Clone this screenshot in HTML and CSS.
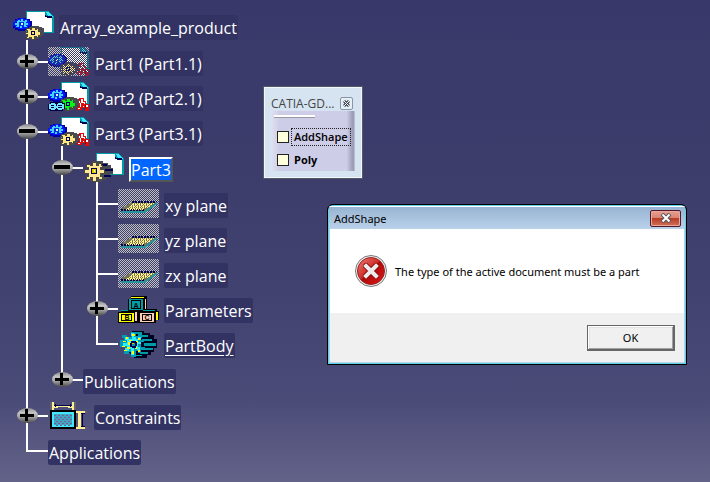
FILE: index.html
```html
<!DOCTYPE html>
<html lang="en">
<head>
<meta charset="utf-8">
<title>Array_example_product</title>
<link rel="stylesheet" href="styles.css">
</head>
<body>
<svg class="defs" width="0" height="0" aria-hidden="true">
  <defs>
    <linearGradient id="ball" x1="0" y1="0" x2="0" y2="1">
      <stop offset="0" stop-color="#8a8a8a"/><stop offset=".3" stop-color="#c4c4c4"/>
      <stop offset=".6" stop-color="#a2a2a2"/><stop offset="1" stop-color="#484848"/>
    </linearGradient>
    <linearGradient id="red" x1="0" y1="0" x2="1" y2="1">
      <stop offset="0" stop-color="#ee8078"/><stop offset=".45" stop-color="#cf2d29"/>
      <stop offset=".5" stop-color="#ae0a0a"/><stop offset="1" stop-color="#e01818"/>
    </linearGradient>

    <symbol id="doc" viewBox="0 0 41 29">
      <path d="M13 0h22l6 6v16h-28z" fill="#009ca5"/>
      <path d="M14 1h18v4h7v16h-25z" fill="#fff"/>
      <path d="M33 1h2l5 4v1h-4z" fill="#42e7ff"/>
      <path d="M32 4h1v1h6v2h-5v-1h-2z" fill="#000052"/>
    </symbol>
    <symbol id="gear-blue" viewBox="0 0 41 29">
      <path d="M5 7h8v1h4v2h2v7h-2v2h-4v1h-8v-1h-3v-2h-2v-6h2v-3h3z" fill="#0000a5"/>
      <path d="M4 8h3v-1h4v1h3v1h2v2h1v4h-2v2h-2v1h-8v-1h-3v-2h-2v-4h2v-2h2z" fill="#0018ff"/>
      <path d="M5 9h2v1h1v-2h2v2h2v-1h2v2h-1v1h2v2h-2v1h1v1h-3v-1h-2v2h-2v-2h-1v1h-3v-1h1v-1h-2v-2h2v-1h-1z" fill="#42d6ff"/>
      <path d="M6 11h5v4h-5z" fill="#0030de"/><path d="M8 12h2v2h-2z" fill="#d6f7ff"/>
    </symbol>
    <symbol id="gear-small" viewBox="0 0 41 29">
      <path d="M18 15h8v1h3v1h2v7h-2v2h-3v2h-9v-1h-3v-8h2v-3h2z" fill="#4a4a52"/>
      <path d="M22 16h1v2h3v2h2v1h-2v2h2v1h-3v3h-2z" fill="#000052"/>
      <path d="M14 17h3v1h1v-2h4v2h1v-1h2v3h2v4h-2v2h-2v-1h-2v3h-3v-2h-2v1h-3v-2h1v-2h-2v-2h2v-2h-1z" fill="currentColor" stroke="#4a4a42"/>
      <path d="M18 20h4v4h-4z" fill="#000052"/><path d="M19 21h2v2h-2z" fill="currentColor"/>
    </symbol>
    <symbol id="figure" viewBox="0 0 41 29">
      <path d="M31 16h5v3h2v3h3v7h-4v-3h-3v2h-5v-3h2v-4h1v-2h-1z" fill="#e70808"/>
      <path d="M33 17h2v3h2v2h-1v-1h-3v4h-1v-4h1zM38 23h2v2h-2zM30 26h2v1h-2zM35 24h1v1h-1z" fill="#fff"/>
      <path d="M37 23h1v4h-1z" fill="#8c0010"/>
    </symbol>
    <symbol id="link" viewBox="0 0 41 29">
      <path d="M2 20h13v1h2v6h-2v2h-13v-1h-2v-6h2z" fill="#000042"/>
      <path d="M3 21h4v1h3v-1h4v1h2v5h-2v1h-4v-1h-3v1h-4v-1h-2v-5h2z" fill="#73e7ff"/>
      <path d="M3 23h3v1h-3zM3 26h3v-1h-3zM10 23h4v1h-4zM10 26h4v-1h-4zM8 22h1v2h-1zM8 26h1v2h-1z" fill="#000052"/>
    </symbol>
    <symbol id="part-instance" viewBox="0 0 41 29">
      <use href="#doc"/><use href="#gear-blue"/><use href="#figure"/><use href="#gear-small"/>
    </symbol>
    <symbol id="plane" viewBox="0 0 41 29">
      <path d="M14 13h25v1l-12 8h-24v-2z" fill="#73735a"/>
      <path d="M14 13h25M3 21h24" stroke="#000052" stroke-width="2" stroke-dasharray="2 1"/>
      <path d="M14 15h20M12 17h20M9 19h18" stroke="#ffef84" stroke-dasharray="2 1"/>
      <path d="M15 14h21M13 16h20M11 18h19M8 20h18" stroke="#ffef84" stroke-dasharray="1 1"/>
      <path d="M3 23h24l4-3 4-3 4-3" fill="none" stroke="#29949c" stroke-width="2"/>
    </symbol>
    <symbol id="plus" viewBox="0 0 21 15">
      <ellipse cx="10.5" cy="7.5" rx="10.5" ry="7.5" fill="url(#ball)"/>
      <path d="M3 6h14v3h-14zM8 1h3v12h-3z" fill="#000"/>
    </symbol>
    <symbol id="minus" viewBox="0 0 21 15">
      <ellipse cx="10.5" cy="7.5" rx="10.5" ry="7.5" fill="url(#ball)"/>
      <path d="M2 5h16v4h-16z" fill="#000"/>
    </symbol>
  </defs>
</svg>

<main class="desktop">
  <section class="tree" aria-label="Specification tree">
    <div class="row">
      <svg class="icon yellow" viewBox="0 0 41 29"><use href="#doc"/><use href="#gear-blue"/><use href="#gear-small"/></svg>
      <span class="label">Array_example_product</span>
    </div>
    <ul class="branch root">
      <li>
        <div class="row">
          <span class="stem"><button class="toggle" type="button" aria-label="Expand Part1"><svg viewBox="0 0 21 15"><use href="#plus"/></svg></button></span>
          <span class="checked"><svg class="icon yellow hidden-part" viewBox="0 0 41 29"><use href="#part-instance"/></svg></span>
          <span class="label">Part1 (Part1.1)</span>
        </div>
      </li>
      <li>
        <div class="row">
          <span class="stem"><button class="toggle" type="button" aria-label="Expand Part2"><svg viewBox="0 0 21 15"><use href="#plus"/></svg></button></span>
          <svg class="icon green" viewBox="0 0 41 29"><use href="#part-instance"/><use href="#link"/></svg>
          <span class="label">Part2 (Part2.1)</span>
        </div>
      </li>
      <li>
        <div class="row">
          <span class="stem"><button class="toggle" type="button" aria-label="Collapse Part3 instance"><svg viewBox="0 0 21 15"><use href="#minus"/></svg></button></span>
          <svg class="icon yellow" viewBox="0 0 41 29"><use href="#part-instance"/></svg>
          <span class="label">Part3 (Part3.1)</span>
        </div>
        <ul class="branch">
          <li>
            <div class="row">
              <span class="stem"><button class="toggle" type="button" aria-label="Collapse Part3"><svg viewBox="0 0 21 15"><use href="#minus"/></svg></button></span>
              <svg class="icon" viewBox="0 0 41 29">
                <use href="#doc"/>
                <path d="M8 8h12v2h5v2h3v3h2v6h-3v4h-4v2h-4v2h-11v-4h9z" fill="#4a4a52"/>
                <path d="M17 11h6v1h-4M21 16h8v1h-7M21 22h6v1h-6" fill="none" stroke="#000052"/>
                <path d="M9 9h4v3h2v-2h3v2h1v2h-2v2h4v4h-4v3h2v3h-4v-2h-2v4h-4v-4h-2v2h-4v-3h2v-3h-4v-4h4v-2h-2v-3h4v1h2z" fill="#ffe794" stroke="#4a4a42"/>
                <path d="M8 15h6v6h-6z" fill="#000052"/><path d="M9 16h4v4h-4z" fill="#dece00"/><path d="M11 17h1v2h-1z" fill="#fff"/>
              </svg>
              <span class="label selected">Part3</span>
            </div>
            <ul class="branch">
              <li><div class="row"><span class="stem"></span><svg class="icon checked" viewBox="0 0 41 29"><use href="#plane"/></svg><span class="label">xy plane</span></div></li>
              <li><div class="row"><span class="stem"></span><svg class="icon checked" viewBox="0 0 41 29"><use href="#plane"/></svg><span class="label">yz plane</span></div></li>
              <li><div class="row"><span class="stem"></span><svg class="icon checked" viewBox="0 0 41 29"><use href="#plane"/></svg><span class="label">zx plane</span></div></li>
              <li>
                <div class="row">
                  <span class="stem"><button class="toggle" type="button" aria-label="Expand Parameters"><svg viewBox="0 0 21 15"><use href="#plus"/></svg></button></span>
                  <svg class="icon" viewBox="0 0 41 29">
                    <path d="M13 2h16v13h10v2h2v9h-3v3h-38v-11h3v-2h7v-11h3z" fill="#000"/>
                    <path d="M13 3h13v1h-13z" fill="#ffff00"/><path d="M27 5h1v10h-1z" fill="#ffceb5"/>
                    <path d="M11 5h14v11h-14z" fill="#009ca5"/>
                    <path d="M3 16h7v1h-7zM25 16h12v1h-12z" fill="#009ca5"/>
                    <path d="M1 19h15v9h-15z" fill="#ffff00"/><path d="M17 18h2v9h-2zM22 19h14v9h-14z" fill="#ffceb5"/><path d="M38 18h2v8h-2z" fill="#ffff00"/>
                    <path d="M13 6h10v9h-10zM14 7v7h8v-7zM3 20h11v7h-11zM4 21v5h9v-5zM24 20h10v7h-10zM25 21v5h8v-5z" fill="#000" fill-rule="evenodd"/>
                    <text class="cube" x="18" y="14">A</text><text class="cube" x="9" y="26">B</text><text class="cube" x="29" y="26">C</text>
                  </svg>
                  <span class="label">Parameters</span>
                </div>
              </li>
              <li>
                <div class="row">
                  <span class="stem"></span>
                  <svg class="icon" viewBox="0 0 41 29">
                    <path d="M14 2h12v2h6v2h4v4h3v9h-3v4h-3v3h-4v3h-13l-5-5z" fill="#000021"/>
                    <path d="M15 3h9v2h-9zM21 6h9v2h-9zM24 10h10v2h-10zM26 14h12v3h-12zM25 19h10v2h-10zM22 23h8v2h-8zM15 26h9v1h-9z" fill="#009ca5"/>
                    <path d="M13 3h5v4h2v-2h4v4h-2v2h4v2h-3v5h4v3h-4v3h-3v-2h-2v6h-5v-5h-2v2h-5v-4h1v-3h-5v-7h4v-2h-2v-3h5v2h4z" fill="#009cb5"/>
                    <path d="M13 4h3v4h2v2h2v-2h3v3h-3v2h3v2h-3v3h2v3h-3v-2h-3v7h-3v-6h-2v2h-4v-3h2v-2h-4v-3h4v-3h-2v-3h4v2h3z" fill="#29efff"/>
                    <path d="M14 5h3v2h-3zM8 8h2v2h-2zM20 9h2v2h-2zM11 11h3v1h-3zM5 12h3v1h-3zM10 13h2v3h-2zM18 12h2v2h-2zM4 17h3v1h-3zM9 18h3v2h-3zM17 18h2v2h-2zM6 21h3v1h-3zM14 22h2v3h-2zM20 21h2v2h-2z" fill="#ffff00"/>
                    <path d="M13 12h5v1h1v4h-1v2h-4v-1h-2v-4h1z" fill="#000052"/><path d="M14 14h3v3h-3z" fill="#009ca5"/><path d="M14 14h2v1h-2z" fill="#dece00"/>
                  </svg>
                  <span class="label underlined">PartBody</span>
                </div>
              </li>
            </ul>
          </li>
          <li>
            <div class="row">
              <span class="stem"><button class="toggle" type="button" aria-label="Expand Publications"><svg viewBox="0 0 21 15"><use href="#plus"/></svg></button></span>
              <span class="label bare">Publications</span>
            </div>
          </li>
        </ul>
      </li>
      <li>
        <div class="row">
          <span class="stem"><button class="toggle" type="button" aria-label="Expand Constraints"><svg viewBox="0 0 21 15"><use href="#plus"/></svg></button></span>
          <svg class="icon" viewBox="0 0 41 29">
            <path d="M2 1h2v8h-2zM26 1h2v8h-2zM37 10h2v2h-2zM37 26h2v2h-2z" fill="#63636b"/>
            <path d="M4 1h2v3h18v-3h2v8h-2v-2h-4v-1h-10v1h-4v2h-2z" fill="#ffef94"/>
            <path d="M28 10h9v2h-4v14h4v2h-9v-2h2v-14h-2z" fill="#ffef94"/>
            <path d="M6 4h18v1h-18zM7 3h1v3h-1zM22 3h1v3h-1zM34 12h1v14h-1zM33 12h4v1h-4zM33 25h4v1h-4z" fill="#000052"/>
            <path d="M2 9h26v19h-26z" fill="#000"/><path d="M4 11h22v15h-22z" fill="#42e7ff"/>
            <path d="M6 13h18v11h-18z" fill="#42a5c6"/>
            <path d="M6 14h18M6 18h18M6 22h18" stroke="#73638c" stroke-dasharray="2 2"/>
            <path d="M8 16h16M8 20h16M8 24h16" stroke="#73638c" stroke-dasharray="2 2"/>
          </svg>
          <span class="label">Constraints</span>
        </div>
      </li>
      <li>
        <div class="row"><span class="stem"></span><span class="label bare">Applications</span></div>
      </li>
    </ul>
  </section>

  <section class="palette" aria-label="CATIA-GD toolbar">
    <header class="palette-title">
      <span>CATIA-GD...</span>
      <button class="palette-close" type="button" aria-label="Close toolbar"><svg viewBox="0 0 7 7"><path d="M1 1l5 5M6 1l-5 5" stroke="#454a54" stroke-width="3"/><path d="M1 1l5 5M6 1l-5 5" stroke="#eef3f8"/></svg></button>
    </header>
    <div class="palette-body">
      <div class="grip"></div>
      <div class="option"><input type="checkbox" id="add-shape"><label class="focused" for="add-shape">AddShape</label></div>
      <div class="option"><input type="checkbox" id="poly"><label class="strong" for="poly">Poly</label></div>
    </div>
  </section>

  <section class="dialog" role="alertdialog" aria-labelledby="dialog-title" aria-describedby="dialog-text">
    <header class="dialog-title">
      <span id="dialog-title">AddShape</span>
      <button class="dialog-close" type="button" aria-label="Close"><svg viewBox="0 0 12 10"><path d="M2 1l8 8M10 1l-8 8" stroke="#56545f" stroke-width="4"/><path d="M2.500 1.500l7 7M9.500 1.500l-7 7" stroke="#fff" stroke-width="2"/></svg></button>
    </header>
    <div class="dialog-body">
      <svg class="error" viewBox="0 0 32 32" aria-hidden="true">
        <circle cx="16" cy="16" r="15.500" fill="#eee" stroke="#777"/><circle cx="16" cy="16" r="13.500" fill="url(#red)" stroke="#9c2020"/>
        <path d="M11 11l10 10M21 11l-10 10" stroke="#8c0808" stroke-width="6" stroke-linecap="round"/>
        <path d="M11 11l10 10M21 11l-10 10" stroke="#ececec" stroke-width="4" stroke-linecap="square"/>
      </svg>
      <p id="dialog-text">The type of the active document must be a part</p>
    </div>
    <footer class="dialog-footer"><button class="ok" type="button">OK</button></footer>
  </section>
</main>
</body>
</html>
```
FILE: styles.css
```css
* { box-sizing: border-box; }

body {
  margin: 0;
  font-family: "Open Sans", "Noto Sans", sans-serif;
  font-size: 12px;
  color: #000;
}

button { padding: 0; margin: 0; font: inherit; }
.defs { position: absolute; }

.desktop {
  position: relative;
  min-height: 100vh;
  padding: 11px 13px 0;
  background: linear-gradient(#38386a 0%, #3d3d6c 35%, #424270 60%, #4b4b78 83%, #636389 100%);
}

/* Specification tree */
.branch {
  list-style: none;
  margin: -6px 0 0 35px;
  padding: 7px 0 1px;
  background: linear-gradient(#fff, #fff) 0 0 / 2px 7px no-repeat;
}
.branch.root { margin-left: 13px; }
.branch li { background: linear-gradient(#fff, #fff) 0 0 / 2px 100% no-repeat; }
.branch li:last-child { background-size: 2px 16px; }

.row { display: flex; align-items: flex-start; height: 35px; }
.stem {
  flex: none;
  display: flex;
  width: 22px;
  height: 29px;
  padding-top: 7px;
  background: linear-gradient(#fff, #fff) 0 14px / 100% 2px no-repeat;
}
.toggle {
  width: 21px;
  height: 15px;
  margin-left: -9px;
  border: 0;
  background: none;
}
.toggle svg { display: block; width: 21px; height: 15px; }

.icon { flex: none; width: 41px; height: 29px; shape-rendering: crispEdges; }
.checked {
  flex: none;
  height: 29px;
  background: repeating-conic-gradient(#c0c0c0 0 25%, transparent 0 50%) 0 0 / 2px 2px;
}
.hidden-part {
  display: block;
  mask: repeating-conic-gradient(#000 0 25%, transparent 0 50%) 0 0 / 2px 2px;
}
.yellow { color: #ffe784; }
.green { color: #00f718; }
.cube { font: bold 7px "Liberation Sans", sans-serif; text-anchor: middle; }

.label {
  height: 25px;
  margin: 4px 0 0 5px;
  padding: 0 1px;
  border-radius: 2px;
  background: #333363;
  color: #fff;
  font-size: 16px;
  line-height: 27px;
  white-space: nowrap;
}
.label.bare { margin-left: 0; }
.label.underlined { text-decoration: underline; text-underline-offset: 3px; }
.label.selected {
  border: 2px solid;
  border-color: #fff #555 #555 #fff;
  border-radius: 0;
  padding: 0;
  background: #0066ff;
  line-height: 22px;
}

/* Floating toolbar */
.palette {
  position: absolute;
  left: 263px;
  top: 86px;
  width: 100px;
  padding: 8px 7px 7px;
  border: 1px solid #555a66;
  box-shadow: inset 0 0 0 1px #f2f7fb;
  background: #d6e4f1;
}
.palette-title {
  display: flex;
  align-items: center;
  justify-content: space-between;
  height: 16px;
  padding-right: 2px;
  color: #454545;
}
.palette-close {
  display: grid;
  place-items: center;
  width: 13px;
  height: 13px;
  border: 1px solid #8795a5;
  border-radius: 2px;
  background: #e6eef6;
}
.palette-close svg { width: 7px; height: 7px; }
.palette-body {
  height: 60px;
  padding: 4px 3px 0;
  background: linear-gradient(90deg, #e0e1f1, #cecde7 10%, #cecde7 90%, #9797b0 98%, #c8c9dc);
}
.grip { width: 41px; height: 3px; border-top: 2px solid #fff; border-bottom: 1px solid #9999a5; }
.option { display: flex; align-items: center; gap: 2px; height: 18px; margin: 10px 0 0 3px; }
.option + .option { margin-top: 5px; }
.option input {
  flex: none;
  appearance: none;
  width: 12px;
  height: 12px;
  margin: 0;
  border: 1px solid #222;
  background: #ffffdc;
}
.option label {
  padding: 0 2px;
  border: 1px solid transparent;
  font-size: 11px;
  line-height: 16px;
  font-weight: 600;
}
.option .focused { border: 1px dotted #222; }
.option .strong { font-weight: 700; }

/* Message box */
.dialog {
  position: absolute;
  left: 327px;
  top: 204px;
  width: 360px;
  border: 1px solid #000;
  border-radius: 6px 6px 0 0;
  box-shadow: inset 0 0 0 1px #5ad2e8;
  padding: 1px;
  overflow: hidden;
  font-family: "Noto Sans", "Open Sans", sans-serif;
  font-size: 11px;
}
.dialog-title {
  display: flex;
  align-items: center;
  justify-content: space-between;
  height: 23px;
  padding: 0 4px 0 5px;
  border-top: 1px solid #fff;
  background: linear-gradient(#98b4d2, #bad1ea);
}
.dialog-close {
  display: grid;
  place-items: center;
  width: 31px;
  height: 17px;
  border: 1px solid #50192a;
  border-radius: 2px;
  box-shadow: inset 0 0 0 1px #eba79c;
  background: linear-gradient(#e3a193, #d98372 48%, #b93d25 50%, #cf7158);
}
.dialog-close svg { width: 12px; height: 10px; }
.dialog-body {
  display: flex;
  align-items: center;
  gap: 8px;
  height: 84px;
  padding-left: 25px;
  border: solid #bad1ea;
  border-width: 0 1px;
  background: #fff;
}
.dialog-body p { margin: 0; white-space: nowrap; }
.error { flex: none; width: 32px; height: 32px; }
.dialog-footer {
  display: flex;
  justify-content: flex-end;
  height: 50px;
  padding: 12px 9px;
  border: 1px solid #bad1ea;
  border-top: 0;
  background: #f0f0f0;
}
.ok {
  width: 88px;
  height: 26px;
  border: solid #666;
  border-width: 1px 2px 2px 1px;
  box-shadow: inset 1px 1px #fff, inset -1px -1px #a0a0a0, inset 2px 2px #e3e3e3;
  background: #f0f0f0;
}
```
